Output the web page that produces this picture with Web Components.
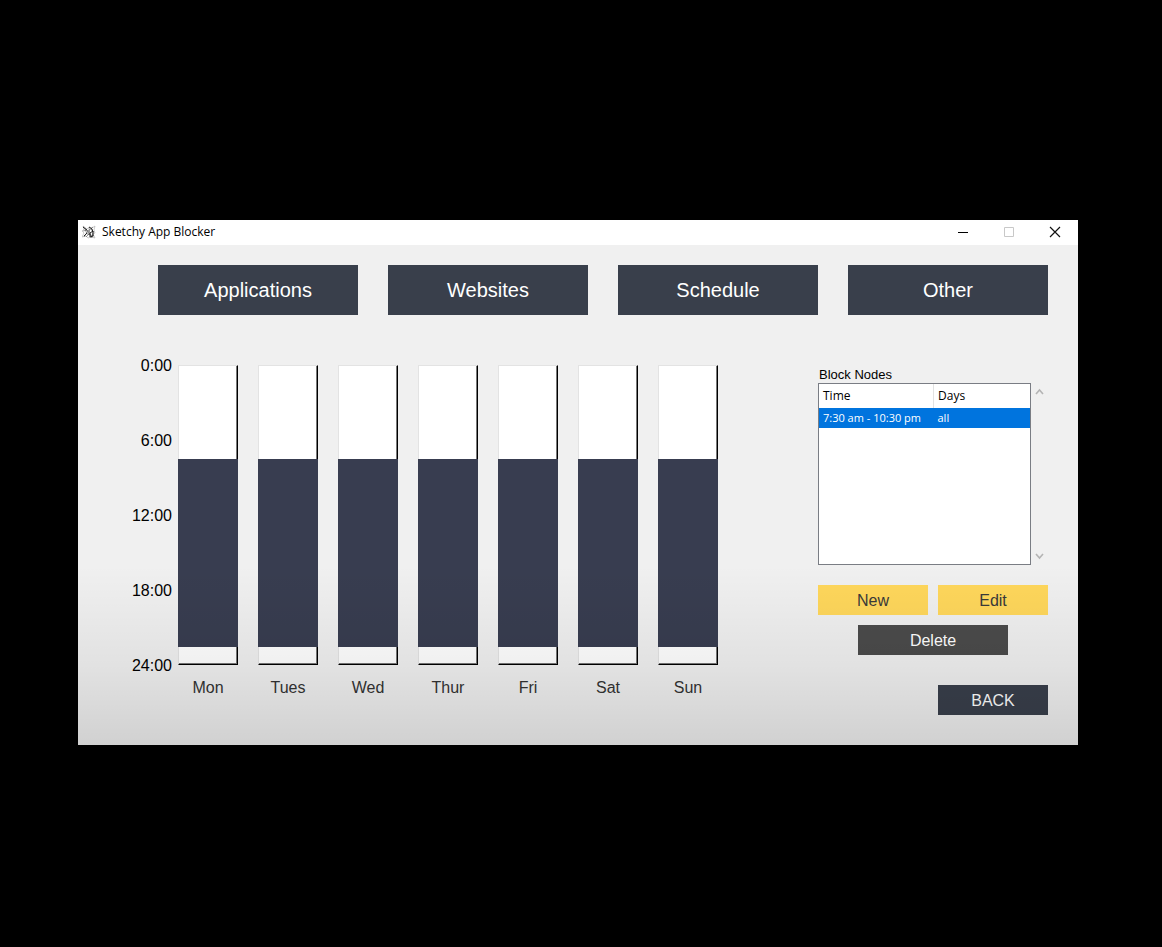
<!DOCTYPE html>
<html lang="en">
<head>
<meta charset="utf-8">
<title>Sketchy App Blocker</title>
<style>
  body { margin: 0; background: #000; color: #000; font: 16px/20px "Liberation Sans", Arial, sans-serif; }
  app-window { margin: 220px 84px 0 78px; }
</style>
</head>
<body>
<app-window caption="Sketchy App Blocker">
  <main-nav slot="nav">
    <flat-button kind="nav">Applications</flat-button>
    <flat-button kind="nav">Websites</flat-button>
    <flat-button kind="nav">Schedule</flat-button>
    <flat-button kind="nav">Other</flat-button>
  </main-nav>
  <week-chart>
    <day-bar>Mon</day-bar>
    <day-bar>Tues</day-bar>
    <day-bar>Wed</day-bar>
    <day-bar>Thur</day-bar>
    <day-bar>Fri</day-bar>
    <day-bar>Sat</day-bar>
    <day-bar>Sun</day-bar>
  </week-chart>
  <node-panel></node-panel>
</app-window>

<script>
  const define = (name, html) => customElements.define(name, class extends HTMLElement {
    constructor() {
      super();
      this.attachShadow({ mode: 'open' }).innerHTML = html;
    }
    connectedCallback() {
      const caption = this.shadowRoot.querySelector('[data-caption]');
      if (caption) caption.textContent = this.getAttribute('caption');
    }
  });

  define('flat-button', `
    <style>
      :host { display: block; --bg: #393f4b; --fg: #fff; }
      :host([kind="yellow"]) { --bg: #ffd75b; --fg: #3a3a3a; }
      :host([kind="grey"]) { --bg: #4b4b4b; }
      button { display: block; width: 100%; height: 30px; margin: 0; padding: 2px 0 0; border: 0;
        background: var(--bg); color: var(--fg); font: inherit; }
      :host([kind="nav"]) button { height: 50px; padding: 0; font-size: 20px; }
    </style>
    <button type="button"><slot></slot></button>`);

  define('main-nav', `
    <style>
      :host { display: block; }
      nav { display: grid; grid-template-columns: repeat(4, 1fr); gap: 30px; }
    </style>
    <nav><slot></slot></nav>`);

  define('app-window', `
    <style>
      :host { display: block; position: relative; background: #f0f0f0; }
      :host::after { content: ""; position: absolute; inset: 0; pointer-events: none;
        background: linear-gradient(to top, rgba(0,0,0,.13), rgba(0,0,0,.06) 80px, rgba(0,0,0,0) 180px); }
      header { display: flex; align-items: center; box-sizing: border-box; height: 25px; padding: 0 0 2px 4px; background: #fff;
        font: 12px/22px "Open Sans", "Noto Sans", sans-serif; }
      .logo { width: 14px; height: 14px; margin-right: 6px; }
      span { flex: 1; }
      header button { display: grid; place-items: center; width: 46px; height: 24px; padding: 0; border: 0; background: none; }
      header button svg { width: 12px; height: 12px; }
      .body { padding: 20px 30px 30px 80px; }
      .content { display: flex; justify-content: space-between; margin: 50px 0 0 -30px; }
    </style>
    <header>
      <svg class="logo" viewBox="0 0 14 14" fill="none" stroke="#555" stroke-width=".6" aria-hidden="true">
        <path d="M1 1l4 3 2-2 3 1 3-2-1 4 1 3-2 1 2 4-4-1-3 1-2-2-4 1 2-4-2-2 2-2z" stroke="#aaa"/>
        <path d="M1 2l5 4 4 7M2 12l4-6 5-4M3 4l2 5 4 1M1 6l4-1 2 4-3 3M7 3l1 7 4 1M9 4l2 3-1 5"/>
        <path d="M1 2l4 3M2 11l3-3M7 2l3 2 1 3M8 8l3-2v5l-3 1z" stroke="#222" stroke-width="1"/>
      </svg>
      <span data-caption></span>
      <button type="button" aria-label="Minimize"><svg viewBox="0 0 12 12" fill="none" stroke="#000"><path d="M1 6.500h10"/></svg></button>
      <button type="button" aria-label="Maximize" disabled><svg viewBox="0 0 12 12" fill="none" stroke="#c8c8c8"><path d="M1.500 1.500h9v9h-9z"/></svg></button>
      <button type="button" aria-label="Close"><svg viewBox="0 0 12 12" fill="none" stroke="#111" stroke-width="1.200"><path d="M1 1l10 10M11 1L1 11"/></svg></button>
    </header>
    <div class="body">
      <slot name="nav"></slot>
      <div class="content"><slot></slot></div>
    </div>`);

  define('day-bar', `
    <style>
      :host { display: block; width: 60px; text-align: center; }
      .track { display: grid; box-sizing: border-box; height: 300px; background: #fff;
        border: 1px solid; border-color: #e3e3e3 #000 #000 #e3e3e3; box-shadow: inset -1px -1px #777; }
      .block { margin: 93px -1px 17px; background: #383d50; }
      .name { margin-top: 13px; color: #333; }
    </style>
    <div class="track"><div class="block"></div></div>
    <div class="name"><slot></slot></div>`);

  define('week-chart', `
    <style>
      :host { display: flex; }
      .axis { display: flex; flex-direction: column; justify-content: space-between;
        width: 44px; height: 320px; margin: -9px 6px 0 0; text-align: right; }
      .days { display: flex; gap: 20px; }
    </style>
    <div class="axis"><div>0:00</div><div>6:00</div><div>12:00</div><div>18:00</div><div>24:00</div></div>
    <div class="days"><slot></slot></div>`);

  define('node-panel', `
    <style>
      :host { display: block; width: 230px; }
      h2 { height: 18px; margin: 0; padding-left: 1px; font: 13px/20px "Liberation Sans", Arial, sans-serif; }
      .list { display: flex; height: 182px; }
      .box { flex: 1; border: 1px solid #7a7d84; background: #fff; }
      table { width: 100%; border-collapse: collapse; table-layout: fixed; font: 12px/20px "Open Sans", "Noto Sans", sans-serif; }
      th, td { padding: 0 4px; font-weight: 400; text-align: left; white-space: nowrap; }
      th { height: 24px; }
      th:first-child { width: 106px; border-right: 1px solid #e2e2e2; }
      td { height: 20px; background: #0074de; color: #fff; font-size: 11px; }
      .scroll { display: flex; flex-direction: column; justify-content: space-between; width: 17px; padding: 4px 0; box-sizing: border-box; }
      .scroll button { display: grid; place-items: center; height: 10px; padding: 0; border: 0; background: none; }
      .scroll svg { width: 9px; height: 8px; }
      .actions { display: grid; grid-template-columns: 1fr 1fr; gap: 10px; margin-top: 20px; }
      .delete { grid-column: 1 / 3; margin: 0 40px; }
      .back { grid-column: 2; margin-top: 20px; }
    </style>
    <h2 id="title">Block Nodes</h2>
    <div class="list">
      <div class="box">
        <table aria-labelledby="title">
          <thead><tr><th scope="col">Time</th><th scope="col">Days</th></tr></thead>
          <tbody><tr><td>7:30 am - 10:30 pm</td><td>all</td></tr></tbody>
        </table>
      </div>
      <div class="scroll">
        <button type="button" aria-label="Scroll up"><svg viewBox="0 0 9 8" fill="none" stroke="#b4b4b4" stroke-width="1.600"><path d="M1 6l3.500-4L8 6"/></svg></button>
        <button type="button" aria-label="Scroll down"><svg viewBox="0 0 9 8" fill="none" stroke="#b4b4b4" stroke-width="1.600"><path d="M1 2l3.500 4L8 2"/></svg></button>
      </div>
    </div>
    <div class="actions">
      <flat-button kind="yellow">New</flat-button>
      <flat-button kind="yellow">Edit</flat-button>
      <flat-button kind="grey" class="delete">Delete</flat-button>
      <flat-button class="back">BACK</flat-button>
    </div>`);
</script>
</body>
</html>
